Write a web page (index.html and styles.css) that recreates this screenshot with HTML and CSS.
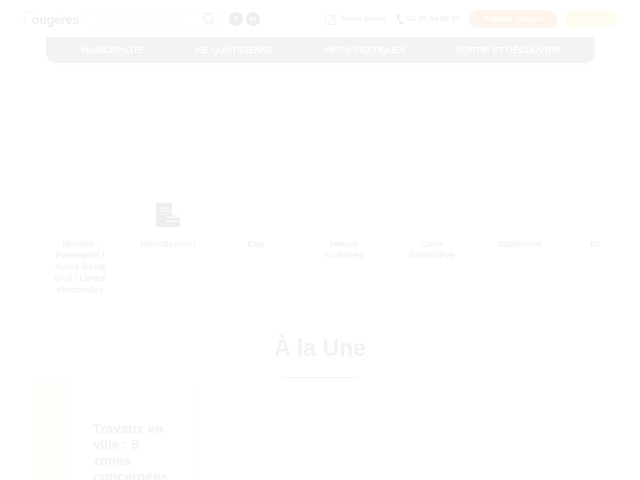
FILE: index.html
```html
<!DOCTYPE html>
<html lang="fr">
<head>
  <meta charset="UTF-8">
  <title>Fougères</title>
  <link rel="stylesheet" href="styles.css">
</head>
<body>
  <header class="topbar">
    <a class="logo"><span class="logo-f">F</span>ougères</a>
    <div class="search">
      <span class="search-text">Que recherchez-vous ?</span>
      <svg class="search-icon" width="14" height="14" viewBox="0 0 14 14"><circle cx="6" cy="6" r="4.6" fill="none" stroke="#eeeeee" stroke-width="1.1"/><path d="M9.4 9.4 13 13" stroke="#eeeeee" stroke-width="1.2"/></svg>
    </div>
    <div class="socials">
      <span class="social">f</span>
      <span class="social">in</span>
    </div>
    <a class="contact">
      <svg width="14" height="14" viewBox="0 0 14 14"><path d="M1.5 3.5h7M1.5 3.5v9h9V7" fill="none" stroke="#f3f3f3" stroke-width="1"/><path d="M4.5 9.5 12 2l1 1-7.500 7.500-2 .5z" fill="none" stroke="#f3f3f3" stroke-width="1"/></svg>
      Nous écrire
    </a>
    <a class="contact phone">
      <svg width="9" height="15" viewBox="0 0 10 15"><path d="M3 1 1 2.500C.5 6 2 11 6 14l3-.5-1.500-2.500-2 .5C4 10 3.300 7.500 3.500 5.500L5 4.500z" fill="#eeeeee"/></svg>
      02 99 94 88 00
    </a>
    <a class="btn btn-citizen">Espace citoyen</a>
    <a class="btn btn-agenda">Agenda</a>
  </header>

  <nav class="mainnav">
    <a>Municipalité</a>
    <a>Vie quotidienne</a>
    <a>Infos pratiques</a>
    <a>Sortir et découvrir</a>
  </nav>

  <section class="shortcuts">
    <a class="shortcut">
      <span class="shortcut-icon"></span>
      <span class="shortcut-label">Identité-Passeport / Actes d'état civil / Listes électorales</span>
    </a>
    <a class="shortcut">
      <svg class="shortcut-icon" width="24" height="26" viewBox="0 0 24 26">
        <path d="M0 0h16v13h-5v11H0z" fill="#eeeeee"/>
        <path d="M4 5h9M4 8h9M4 11h6" stroke="#fff" stroke-width="1"/>
        <path d="M10 15h14v9H10z" fill="#eeeeee"/>
        <path d="M14 15v-2h6v2" fill="none" stroke="#eeeeee" stroke-width="1.500"/>
        <path d="M10 18.500h14" stroke="#fff" stroke-width="1"/>
      </svg>
      <span class="shortcut-label">Recrutement</span>
    </a>
    <a class="shortcut">
      <span class="shortcut-icon"></span>
      <span class="shortcut-label">Eau</span>
    </a>
    <a class="shortcut">
      <span class="shortcut-icon"></span>
      <span class="shortcut-label">Menus scolaires</span>
    </a>
    <a class="shortcut">
      <span class="shortcut-icon"></span>
      <span class="shortcut-label">Carte interactive</span>
    </a>
    <a class="shortcut">
      <span class="shortcut-icon"></span>
      <span class="shortcut-label">Stationner</span>
    </a>
    <a class="shortcut">
      <span class="shortcut-icon"></span>
      <span class="shortcut-label">Etudiant</span>
    </a>
  </section>

  <section class="news">
    <h2 class="news-title">À la Une</h2>
    <div class="news-rule"></div>
    <article class="card">
      <div class="card-stripe"></div>
      <h3 class="card-title">Travaux en ville : 5 zones concernées</h3>
    </article>
  </section>
</body>
</html>
```

FILE: styles.css
```css
html, body {
  height: 480px;
  overflow: hidden;
}
body {
  background: #fff;
  color: #f2f2f2;
  font-family: 'Liberation Sans', sans-serif;
  font-weight: bold;
  margin: 0;
  filter: blur(0.4px);
}
.topbar {
  display: flex;
  align-items: center;
  height: 37px;
  padding-left: 22px;
}
.logo {
  width: 63px;
  font-size: 12.500px;
  letter-spacing: -0.2px;
  color: #efefef;
}
.logo-f {
  color: #fcf8ee;
  font-family: 'Liberation Serif', serif;
  font-style: italic;
  font-weight: normal;
  font-size: 18px;
  margin-right: -1px;
}
.search {
  display: flex;
  align-items: center;
  justify-content: space-between;
  width: 139px;
  height: 21px;
  box-sizing: border-box;
  padding: 0 7px 0 11px;
  border: 1px solid #fcfcfc;
  border-radius: 11px;
  font-weight: normal;
  font-size: 8.500px;
  color: #fbfbfb;
  white-space: nowrap;
}
.socials {
  display: flex;
  gap: 3px;
  margin-left: 5px;
  margin-right: 64px;
}
.social {
  display: flex;
  align-items: center;
  justify-content: center;
  width: 14px;
  height: 14px;
  border-radius: 50%;
  background: #eeeeee;
  color: #fff;
  font-size: 8px;
}
.contact {
  display: flex;
  align-items: center;
  gap: 4px;
  font-size: 8px;
  color: #f2f2f2;
  margin-right: 10px;
  white-space: nowrap;
}
.phone {
  gap: 2px;
  margin-right: 9px;
}
.btn {
  display: block;
  height: 18px;
  line-height: 18px;
  border-radius: 9px;
  font-size: 8px;
  text-align: center;
  color: #fff;
}
.btn-citizen {
  width: 88px;
  background: #fdf5ed;
}
.btn-agenda {
  width: 52px;
  margin-left: 8px;
  background: #fefcef;
}
.mainnav {
  display: flex;
  margin: 0 45px 0 46px;
  padding-left: 35px;
  gap: 50px;
  height: 26px;
  align-items: center;
  background: #f3f3f3;
  border-radius: 0 0 10px 10px;
  box-shadow: 0 2px 6px rgba(0,0,0,0.012);
  color: #fff;
  font-size: 9px;
  text-transform: uppercase;
  white-space: nowrap;
}
.shortcuts {
  display: flex;
  width: 564px;
  margin: 140px 0 0 36px;
  overflow: hidden;
}
.shortcut {
  flex: 0 0 88px;
  display: flex;
  flex-direction: column;
  align-items: center;
  font-size: 9px;
  line-height: 11.500px;
  text-align: center;
}
.shortcut-icon {
  display: block;
  height: 26px;
  margin-bottom: 9.500px;
}
.shortcut-label {
  width: 58px;
}
.news {
  margin-top: 37.500px;
}
.news-title {
  margin: 0;
  font-size: 23px;
  line-height: 28px;
  text-align: center;
}
.news-rule {
  width: 76px;
  height: 1px;
  margin: 15px auto 0;
  background: #fdf3ea;
}
.card {
  display: flex;
  width: 157px;
  height: 120px;
  margin: 2px 0 0 36px;
  border-right: 1px solid #fdfdfd;
}
.card-stripe {
  flex: 0 0 32px;
  background: #fffefb;
}
.card-title {
  margin: 41px 0 0 25px;
  font-size: 13.500px;
  line-height: 16px;
  width: 80px;
}
```
